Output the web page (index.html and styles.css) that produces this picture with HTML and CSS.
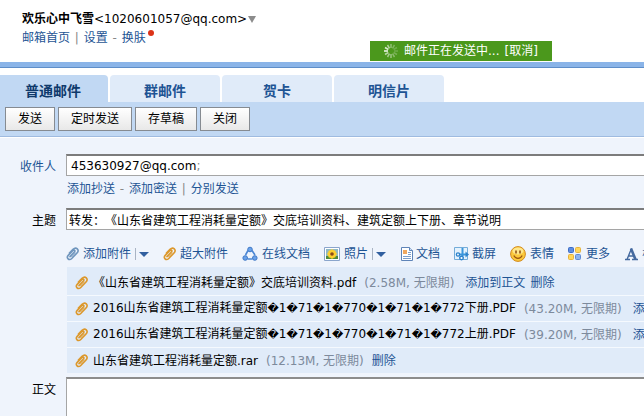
FILE: index.html
```html
<!DOCTYPE html>
<html lang="zh-CN">
<head>
    <meta charset="UTF-8">
    <meta name="viewport" content="width=device-width, initial-scale=1.0">
    <title>QQ邮箱 - 写信</title>
    <link rel="stylesheet" href="styles.css">
</head>
<body>

<!-- shared icon shapes -->
<svg class="defs" width="0" height="0">
    <symbol id="clip" viewBox="0 0 13 14">
        <path d="M4 9.6 8.4 5c1.2-1.2-.3-2.6-1.4-1.5L2.2 8.400c-2.300 2.400.9 5.700 3.300 3.300l5.300-5.500C14 2.900 10.200-.8 7 2.400L3.400 6.100" fill="none" stroke="currentColor" stroke-width="1.600" stroke-linecap="round"/>
        <path d="M5.500 10 9.700 5.600" fill="none" stroke="currentColor" stroke-width="1"/>
    </symbol>
</svg>

<header class="header">
    <div class="user"><b>欢乐心中飞雪</b>&lt;1020601057@qq.com&gt;<span class="more"></span></div>
    <nav class="links">
        <a href="#">邮箱首页</a> <i>|</i> <a href="#">设置</a> <i>-</i> <a href="#" class="skin">换肤</a>
    </nav>
    <div class="status" role="status">
        <svg width="16" height="16" viewBox="0 0 16 16" fill="none" stroke="#fff" stroke-width="1.500">
            <path d="M8 1v4" opacity=".4"/>
            <path d="m11.500 2-2 3.400" opacity=".3"/>
            <path d="m14 4.500-3.400 2" opacity=".2"/>
            <path d="M15 8h-4" opacity=".2"/>
            <path d="m14 11.500-3.400-2" opacity=".25"/>
            <path d="m11.500 14-2-3.400" opacity=".35"/>
            <path d="M8 15v-4" opacity=".45"/>
            <path d="m4.500 14 2-3.400" opacity=".5"/>
            <path d="m2 11.500 3.400-2" opacity=".6"/>
            <path d="M1 8h4" opacity=".95"/>
            <path d="m2 4.500 3.400 2" opacity=".8"/>
            <path d="m4.500 2 2 3.400" opacity=".6"/>
        </svg>
        <span>邮件正在发送中...</span>
        <a href="#">[取消]</a>
    </div>
</header>

<nav class="tabs">
    <a href="#" class="tab active">普通邮件</a>
    <a href="#" class="tab">群邮件</a>
    <a href="#" class="tab">贺卡</a>
    <a href="#" class="tab">明信片</a>
</nav>

<div class="actions">
    <button type="button">发送</button>
    <button type="button">定时发送</button>
    <button type="button">存草稿</button>
    <button type="button">关闭</button>
</div>

<form class="compose">
    <label class="label to" for="to">收件人</label>
    <div class="field">
        <div class="box">
            <span class="addr">453630927@qq.com<i>;</i></span>
            <input id="to" type="text">
        </div>
        <div class="links cc">
            <a href="#">添加抄送</a> <i>-</i> <a href="#">添加密送</a> <i>|</i> <a href="#">分别发送</a>
        </div>
    </div>

    <label class="label" for="subject">主题</label>
    <div class="field">
        <input id="subject" class="box" type="text" value="转发：《山东省建筑工程消耗量定额》交底培训资料、建筑定额上下册、章节说明">

        <div class="tools">
            <a href="#" class="tool">
                <svg class="blue" width="13" height="14"><use href="#clip"/></svg>添加附件<span class="drop"></span>
            </a>
            <a href="#" class="tool">
                <svg class="gold" width="13" height="14"><use href="#clip"/></svg>超大附件
            </a>
            <a href="#" class="tool">
                <svg width="16" height="16" viewBox="0 0 16 16">
                    <path d="M6 4.500 3.500 9M10 4.500 13 9M5.500 13h5" fill="none" stroke="#4a86d4" stroke-width="1.600"/>
                    <g fill="#6aa2ea" stroke="#3f78c6">
                        <circle cx="8" cy="3.500" r="2.300"/>
                        <circle cx="3.200" cy="12" r="2.300"/>
                        <circle cx="12.800" cy="12" r="2.300"/>
                    </g>
                </svg>在线文档
            </a>
            <a href="#" class="tool">
                <svg width="16" height="14" viewBox="0 0 16 14">
                    <path d="M.5.5h15v13H.5z" fill="#fff" stroke="#8aa5cc"/>
                    <path d="M2 2h12v10H2z" fill="#8fb8c4"/>
                    <path d="M2 9h12v3H2z" fill="#4f8a3c"/>
                    <g fill="#ffd02e">
                        <circle cx="8" cy="4" r="1.800"/>
                        <circle cx="8" cy="10" r="1.800"/>
                        <circle cx="5" cy="7" r="1.800"/>
                        <circle cx="11" cy="7" r="1.800"/>
                        <circle cx="6" cy="5" r="1.800"/>
                        <circle cx="10" cy="5" r="1.800"/>
                        <circle cx="6" cy="9" r="1.800"/>
                        <circle cx="10" cy="9" r="1.800"/>
                    </g>
                    <circle cx="8" cy="7" r="1.800" fill="#8c4a12"/>
                </svg>照片<span class="drop"></span>
            </a>
            <a href="#" class="tool tight">
                <svg width="14" height="14" viewBox="0 0 14 14">
                    <path d="M1.500.5h8l3 3v10h-11z" fill="#fff" stroke="#5f84b8"/>
                    <path d="M9.500.5v3h3" fill="#cfe0f5" stroke="#5f84b8"/>
                    <path d="M3 3h4v4H3z" fill="#f0a860"/>
                    <path d="M8 5.500h3M8 7.500h3M3 9.500h8M3 11.500h8" stroke="#7d9fcc"/>
                </svg>文档
            </a>
            <a href="#" class="tool tight">
                <svg width="16" height="16" viewBox="0 0 16 16">
                    <path d="M.5 1.500h13v12H.5z" fill="#e4f2fd" stroke="#74acd9"/>
                    <path d="M8.500 2v8M4 8.500h8" stroke="#3b96dc" stroke-width="2"/>
                    <circle cx="7.500" cy="12" r="1.800" fill="#fff" stroke="#2d83cc" stroke-width="1.400"/>
                    <circle cx="4" cy="8.500" r="1.600" fill="#fff" stroke="#2d83cc" stroke-width="1.400"/>
                    <path d="m11.500 5.500 3.500 3-3.500 3z" fill="#2d83cc"/>
                </svg>截屏
            </a>
            <a href="#" class="tool">
                <svg width="16" height="16" viewBox="0 0 16 16">
                    <circle cx="8" cy="8" r="7.400" fill="#fbc93c" stroke="#d38a1e"/>
                    <ellipse cx="8" cy="5" rx="5.500" ry="3.500" fill="#fee78c"/>
                    <path d="M6 4.500v3M10 4.500v3" stroke="#8a4a0c" stroke-width="1.500"/>
                    <path d="M3.800 9.500c1.600 3.700 6.800 3.700 8.400 0" fill="none" stroke="#9c560f" stroke-width="1.200"/>
                </svg>表情
            </a>
            <a href="#" class="tool">
                <svg width="14" height="14" viewBox="0 0 14 14">
                    <rect x=".5" y=".5" width="5" height="5" rx="1" fill="#5d8de0" stroke="#3f6cc4"/>
                    <rect x="7.500" y=".5" width="5" height="5" rx="1" fill="#ffd65c" stroke="#e8b23c"/>
                    <rect x=".5" y="7.500" width="5" height="5" rx="1" fill="#ffd65c" stroke="#e8b23c"/>
                    <rect x="7.500" y="7.500" width="5" height="5" rx="1" fill="#8fb4ee" stroke="#5f8ad4"/>
                </svg>更多
            </a>
            <a href="#" class="tool tight">
                <svg width="16" height="14" viewBox="0 0 16 14">
                    <path d="M1 12.500h5M8 12.500h6M3 12.500 7.500 1.500M4.500 9h6" fill="none" stroke="#44699f" stroke-width="1.400"/>
                    <path d="M7 1.500 11.500 12.500" stroke="#44699f" stroke-width="2.600"/>
                </svg>格式
            </a>
        </div>

        <ul class="files">
            <li>
                <svg class="gold" width="13" height="14"><use href="#clip"/></svg>
                <span>《山东省建筑工程消耗量定额》交底培训资料.pdf</span>
                <span class="size">(2.58M, 无限期)</span>
                <a href="#" class="insert">添加到正文</a>
                <a href="#">删除</a>
            </li>
            <li>
                <svg class="gold" width="13" height="14"><use href="#clip"/></svg>
                <span>2016山东省建筑工程消耗量定额<s>&#xFFFD;</s>1<s>&#xFFFD;</s>71<s>&#xFFFD;</s>1<s>&#xFFFD;</s>770<s>&#xFFFD;</s>1<s>&#xFFFD;</s>71<s>&#xFFFD;</s>1<s>&#xFFFD;</s>772下册.PDF</span>
                <span class="size">(43.20M, 无限期)</span>
                <a href="#" class="insert">添加到正文</a>
                <a href="#">删除</a>
            </li>
            <li>
                <svg class="gold" width="13" height="14"><use href="#clip"/></svg>
                <span>2016山东省建筑工程消耗量定额<s>&#xFFFD;</s>1<s>&#xFFFD;</s>71<s>&#xFFFD;</s>1<s>&#xFFFD;</s>770<s>&#xFFFD;</s>1<s>&#xFFFD;</s>71<s>&#xFFFD;</s>1<s>&#xFFFD;</s>772上册.PDF</span>
                <span class="size">(39.20M, 无限期)</span>
                <a href="#" class="insert">添加到正文</a>
                <a href="#">删除</a>
            </li>
            <li>
                <svg class="gold" width="13" height="14"><use href="#clip"/></svg>
                <span>山东省建筑工程消耗量定额.rar</span>
                <span class="size">(12.13M, 无限期)</span>
                <a href="#">删除</a>
            </li>
        </ul>
    </div>

    <label class="label" for="content">正文</label>
    <textarea id="content" class="content"></textarea>
</form>

</body>
</html>
```
FILE: styles.css
```css
* {
    box-sizing: border-box;
}

body {
    margin: 0;
    min-height: 100vh;
    display: flex;
    flex-direction: column;
    overflow: hidden;
    background: #fff;
    color: #000;
    font: 12px/18px "DejaVu Sans", "Noto Sans CJK SC", sans-serif;
    text-spacing-trim: space-all;
    white-space: nowrap;
}

a {
    color: #1e5494;
    text-decoration: none;
}

a:hover {
    text-decoration: underline;
}

i {
    color: #888;
    font-style: normal;
}

/* broken characters in file names */
s {
    font-size: 11px;
    text-decoration: none;
}

svg {
    flex: none;
}

.defs {
    position: absolute;
}

/* header */
.header {
    position: relative;
    height: 68px;
    padding: 10px 22px 0;
    border-bottom: 1px solid #5e8ec9;
    box-shadow: inset 0 -5px #8ab4e8;
}

.more {
    display: inline-block;
    margin-left: 1px;
    border: 4px solid transparent;
    border-top: 7px solid #8c8c8c;
    border-bottom: 0;
}

.links {
    padding-top: 1px;
    color: #1e5494;
}

.links i {
    padding: 0 1px;
}

.skin {
    position: relative;
}

.skin::after {
    content: "";
    position: absolute;
    top: -1px;
    right: -8px;
    width: 6px;
    height: 6px;
    border-radius: 50%;
    background: #dc3318;
}

.status {
    position: absolute;
    top: 41px;
    left: 370px;
    display: flex;
    align-items: center;
    gap: 5px;
    height: 20px;
    padding: 0 14px 0 13px;
    background: #4b981c;
    color: #fff;
}

.status a {
    color: #fff;
}

/* tabs */
.tabs {
    display: flex;
    gap: 2px;
    padding-top: 7px;
}

.tab {
    width: 110px;
    height: 27px;
    border-radius: 4px 4px 0 0;
    background: #e0ebf9;
    font-size: 14px;
    font-weight: bold;
    line-height: 32px;
    text-align: center;
}

.tab.active {
    width: 108px;
    padding-right: 2px;
    border-top-left-radius: 0;
    background: #c1d8f3;
    color: #0f3a6c;
}

.actions {
    display: flex;
    gap: 3px;
    padding: 5px;
    border-bottom: 1px solid #9fbbe0;
    background: #c1d8f3;
}

.actions button {
    height: 24px;
    padding: 0 12px;
    border: 1px solid #868b91;
    background: linear-gradient(#fff, #e8e8e8);
    color: #000;
    font: inherit;
    cursor: pointer;
}

/* compose form */
.compose {
    flex: 1;
    display: grid;
    grid-template-columns: 56px minmax(0, 1fr);
    grid-template-rows: auto auto 1fr;
    column-gap: 10px;
    padding-top: 16px;
    border-top: 1px solid #fff;
    background: #eff4fc;
}

.label {
    padding-top: 4px;
    text-align: right;
}

.label.to {
    color: #1e5494;
}

.field {
    overflow: hidden;
}

.box {
    display: flex;
    align-items: center;
    width: 100%;
    height: 22px;
    margin: 0;
    padding: 0 2px;
    border: 1px solid #a5a5a5;
    border-top: 2px solid #7c7c7c;
    border-right: 0;
    background: #fff;
    color: #000;
    font: inherit;
    text-spacing-trim: inherit;
}

.box input {
    flex: 1;
    min-width: 0;
    height: 18px;
    padding: 0;
    border: 0;
    outline: 0;
    background: transparent;
    font: inherit;
}

.addr {
    padding-left: 2px;
}

.cc {
    padding: 4px 1px 10px;
}

.tools {
    display: flex;
    gap: 14px;
    height: 37px;
    padding: 11px 0 0;
}

.tool {
    flex: none;
    display: flex;
    align-items: center;
    gap: 4px;
    height: 26px;
}

.tool.tight {
    gap: 2px;
}

.drop {
    display: flex;
    align-items: center;
    height: 12px;
    padding-left: 3px;
    border-left: 1px solid #a9b4c4;
}

.drop::after {
    content: "";
    border: 5px solid transparent;
    border-top-color: #315f9f;
    border-bottom: 0;
}

.blue {
    color: #6f95bd;
}

.gold {
    color: #dc982c;
}

.files {
    display: grid;
    gap: 1px;
    margin: 0 0 4px 1px;
    padding: 3px 0 0;
    background: linear-gradient(#e0ebf9 3px, #f5f9fe 3px);
    list-style: none;
}

.files li {
    display: flex;
    align-items: center;
    gap: 5px;
    height: 25px;
    padding-left: 8px;
    background: #e0ebf9;
}

.files li > * {
    flex: none;
}

.size {
    padding: 0 3px;
    color: #7d8a9c;
}

.insert {
    padding-left: 3px;
}

.content {
    width: 100%;
    min-height: 39px;
    border: 1px solid #a5a5a5;
    border-top: 2px solid #8c8c8c;
    border-right: 0;
    border-bottom: 0;
    outline: 0;
    background: #fff;
    font: inherit;
    resize: none;
}
```
